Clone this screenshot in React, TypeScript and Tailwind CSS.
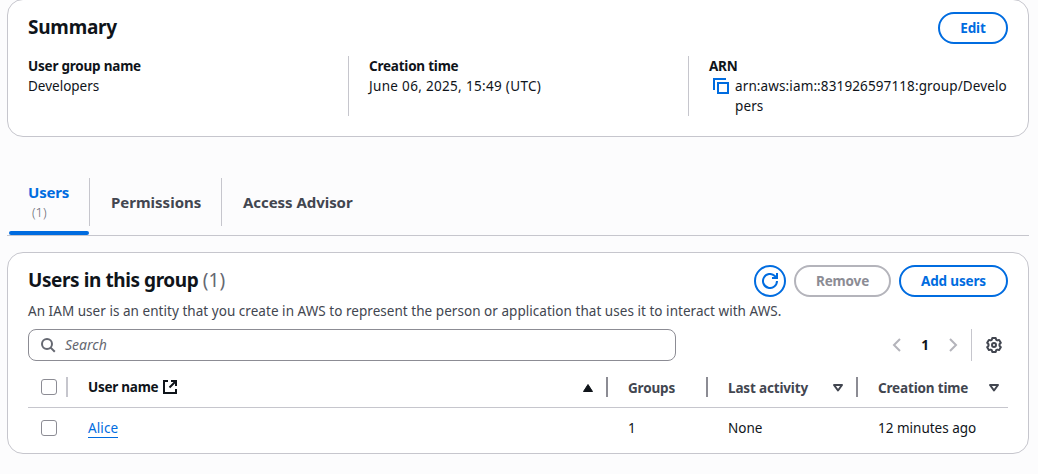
import type { ReactNode } from "react";

function CopyIcon() {
  return (
    <svg width="16" height="16" viewBox="0 0 16 16" fill="none" stroke="#006ce0" strokeWidth="2">
      <path d="M1 12V1h12" />
      <path d="M5 5h10v10H5z" />
    </svg>
  );
}

function RefreshIcon() {
  return (
    <svg width="16" height="16" viewBox="0 0 16 16" fill="none" stroke="#006ce0" strokeWidth="2">
      <path d="M15 8a7 7 0 1 1-2.2-5.1L15 5" />
      <path d="M10 5h5V0" />
    </svg>
  );
}

function SearchIcon() {
  return (
    <svg width="16" height="16" viewBox="0 0 16 16" fill="none" stroke="#656871" strokeWidth="2">
      <circle cx="7" cy="7" r="5" />
      <path d="m10.6 10.6 4.2 4.2" />
    </svg>
  );
}

function ExternalIcon() {
  return (
    <svg width="16" height="16" viewBox="0 0 16 16" fill="none" stroke="#0f141a" strokeWidth="2">
      <path d="M6 2H2v12h12v-4" />
      <path d="M9 2h5v5M14 2 7.5 8.5" />
    </svg>
  );
}

function GearIcon() {
  return (
    <svg width="16" height="16" viewBox="0 0 16 16" fill="none" stroke="#424650" strokeWidth="2" strokeLinejoin="round">
      <path d="M6.3 1h3.4l.5 1.8 1.1.6 1.8-.5 1.7 2.9L13.5 7.2v1.6l1.3 1.4-1.7 2.9-1.8-.5-1.1.6-.5 1.8H6.3l-.5-1.8-1.1-.6-1.8.5-1.7-2.9 1.3-1.4V7.2L1.2 5.8l1.7-2.9 1.8.5 1.1-.6z" />
      <circle cx="8" cy="8" r="2" />
    </svg>
  );
}

function Chevron({ d }: { d: string }) {
  return (
    <svg width="16" height="16" viewBox="0 0 16 16" fill="none" stroke="#b4b4bb" strokeWidth="2">
      <path d={d} />
    </svg>
  );
}

function SortDown() {
  return (
    <svg width="16" height="16" viewBox="0 0 16 16" fill="none" stroke="#424650" strokeWidth="2" strokeLinejoin="round">
      <path d="M4 6h8l-4 5.5z" />
    </svg>
  );
}

function SortUp() {
  return (
    <svg width="16" height="16" viewBox="0 0 16 16" fill="#0f141a" stroke="#0f141a" strokeWidth="1" strokeLinejoin="round">
      <path d="M3.5 12.5h9L8 5.5z" />
    </svg>
  );
}

function Checkbox() {
  return <span className="block size-4 rounded-[3px] border border-[#8c8c94] bg-white" />;
}

function Label({ children }: { children: ReactNode }) {
  return <div className="font-bold tracking-[-0.22px]">{children}</div>;
}

function Button({ className, children }: { className: string; children: ReactNode }) {
  return (
    <button className={`flex h-8 items-center justify-center rounded-full border-2 font-bold tracking-[-0.15px] ${className}`}>
      {children}
    </button>
  );
}

export default function App() {
  return (
    <div className="h-[474px] overflow-hidden bg-[#fcfcfd] pr-[9px] pl-[7px] font-['Noto_Sans',sans-serif] text-[13.5px] leading-5 text-[#0f141a]">
      <section className="-mt-px h-[138px] rounded-2xl border border-[#c6c6cd] bg-white px-5 pt-3">
        <div className="flex h-8 items-center justify-between">
          <h2 className="pb-0.5 text-[19px] leading-6 font-bold tracking-[-0.23px]">Summary</h2>
          <Button className="w-[70px] border-[#006ce0] text-[#006ce0]">Edit</Button>
        </div>
        <div className="mt-3 grid h-[60px] grid-cols-[320px_340px_320px]">
          <div>
            <Label>User group name</Label>
            <div>Developers</div>
          </div>
          <div className="border-l border-[#c6c6cd] pl-5">
            <Label>Creation time</Label>
            <div className="tracking-[0.32px]">June 06, 2025, 15:49 (UTC)</div>
          </div>
          <div className="border-l border-[#c6c6cd] pl-5">
            <Label>ARN</Label>
            <div className="flex gap-1.5 pl-1">
              <span className="shrink-0 pt-0.5"><CopyIcon /></span>
              <span className="break-all tracking-[0.12px]">arn:aws:iam::831926597118:group/Developers</span>
            </div>
          </div>
        </div>
      </section>

      <nav className="mt-[41px] flex h-[58px] border-b border-[#c6c6cd] text-[15px] font-bold text-[#424650]">
        <div className="flex w-[83px] flex-col pl-0.5">
          <div className="flex h-12 flex-col border-r border-[#c6c6cd] pt-1 pl-[19px] text-[#006ce0]">
            <span className="tracking-[-0.2px]">Users</span>
            <span className="pl-1 text-[13px] font-light text-[#656871]">(1)</span>
          </div>
          <div className="mt-[5px] h-1 w-20 shrink-0 rounded-[2px] bg-[#006ce0]" />
        </div>
        <div className="flex h-12 w-[132px] items-center border-r border-[#c6c6cd] pl-[21px]">Permissions</div>
        <div className="flex h-12 items-center pl-[21px] tracking-[-0.05px]">Access Advisor</div>
      </nav>

      <section className="mt-4 h-[202px] rounded-2xl border border-[#c6c6cd] bg-white px-5 pt-3">
        <div className="flex h-8 items-center justify-between">
          <h2 className="pb-0.5 text-[19px] leading-6 font-bold tracking-[-0.42px]">
            Users in this group <span className="font-normal tracking-normal text-[#656871]">(1)</span>
          </h2>
          <div className="flex gap-2">
            <Button className="w-8 border-[#006ce0]"><RefreshIcon /></Button>
            <Button className="w-[97px] border-[#b4b4bb] text-[#8c8c94]">Remove</Button>
            <Button className="w-[109px] border-[#006ce0] text-[#006ce0]">Add users</Button>
          </div>
        </div>
        <p className="mt-1 whitespace-nowrap tracking-[0.04px] text-[#424650]">
          An IAM user is an entity that you create in AWS to represent the person or application that uses it to interact with AWS.
        </p>
        <div className="mt-2 flex h-8 items-center">
          <div className="flex h-8 w-[648px] items-center gap-[9px] rounded-lg border border-[#8c8c94] pl-[11px]">
            <SearchIcon />
            <span className="text-[14px] text-[#656871] italic">Search</span>
          </div>
          <div className="ml-auto flex h-8 w-[83px] items-center justify-between border-r border-[#c6c6cd] pr-2.5">
            <Chevron d="M11 2 5 8l6 6" />
            <span className="font-bold">1</span>
            <Chevron d="m5 2 6 6-6 6" />
          </div>
          <span className="ml-3.5 pr-1.5"><GearIcon /></span>
        </div>

        <div className="mt-1.5 grid h-[41px] grid-cols-[40px_540px_100px_150px_150px] border-b border-[#c6c6cd] font-bold tracking-[-0.16px] text-[#424650]">
          <div className="flex items-center justify-between pl-[13px]">
            <Checkbox />
            <span className="h-5 w-0.5 bg-[#c6c6cd]" />
          </div>
          <div className="flex items-center pl-5 text-[#0f141a]">
            <span className="tracking-[-0.25px]">User name</span>
            <span className="ml-1"><ExternalIcon /></span>
            <span className="ml-auto"><SortUp /></span>
            <span className="ml-2.5 h-5 w-0.5 bg-[#8c8c94]" />
          </div>
          <div className="flex items-center justify-between pl-5">
            <span className="pt-0.5">Groups</span>
            <span className="h-5 w-0.5 bg-[#8c8c94]" />
          </div>
          <div className="flex items-center pl-5">
            <span className="pt-0.5">Last activity</span>
            <span className="ml-auto"><SortDown /></span>
            <span className="ml-2.5 h-5 w-0.5 bg-[#8c8c94]" />
          </div>
          <div className="flex items-center justify-between pr-1.5 pl-5">
            <span className="pt-0.5">Creation time</span>
            <SortDown />
          </div>
        </div>
        <div className="grid h-10 grid-cols-[40px_540px_100px_150px_150px] items-center">
          <div className="pl-[13px]"><Checkbox /></div>
          <div className="pl-5">
            <a className="inline-block h-5 border-b border-[#006ce0] tracking-[0.1px] text-[#006ce0]">Alice</a>
          </div>
          <div className="pl-5">1</div>
          <div className="pl-5">None</div>
          <div className="pl-5">12 minutes ago</div>
        </div>
      </section>
    </div>
  );
}
